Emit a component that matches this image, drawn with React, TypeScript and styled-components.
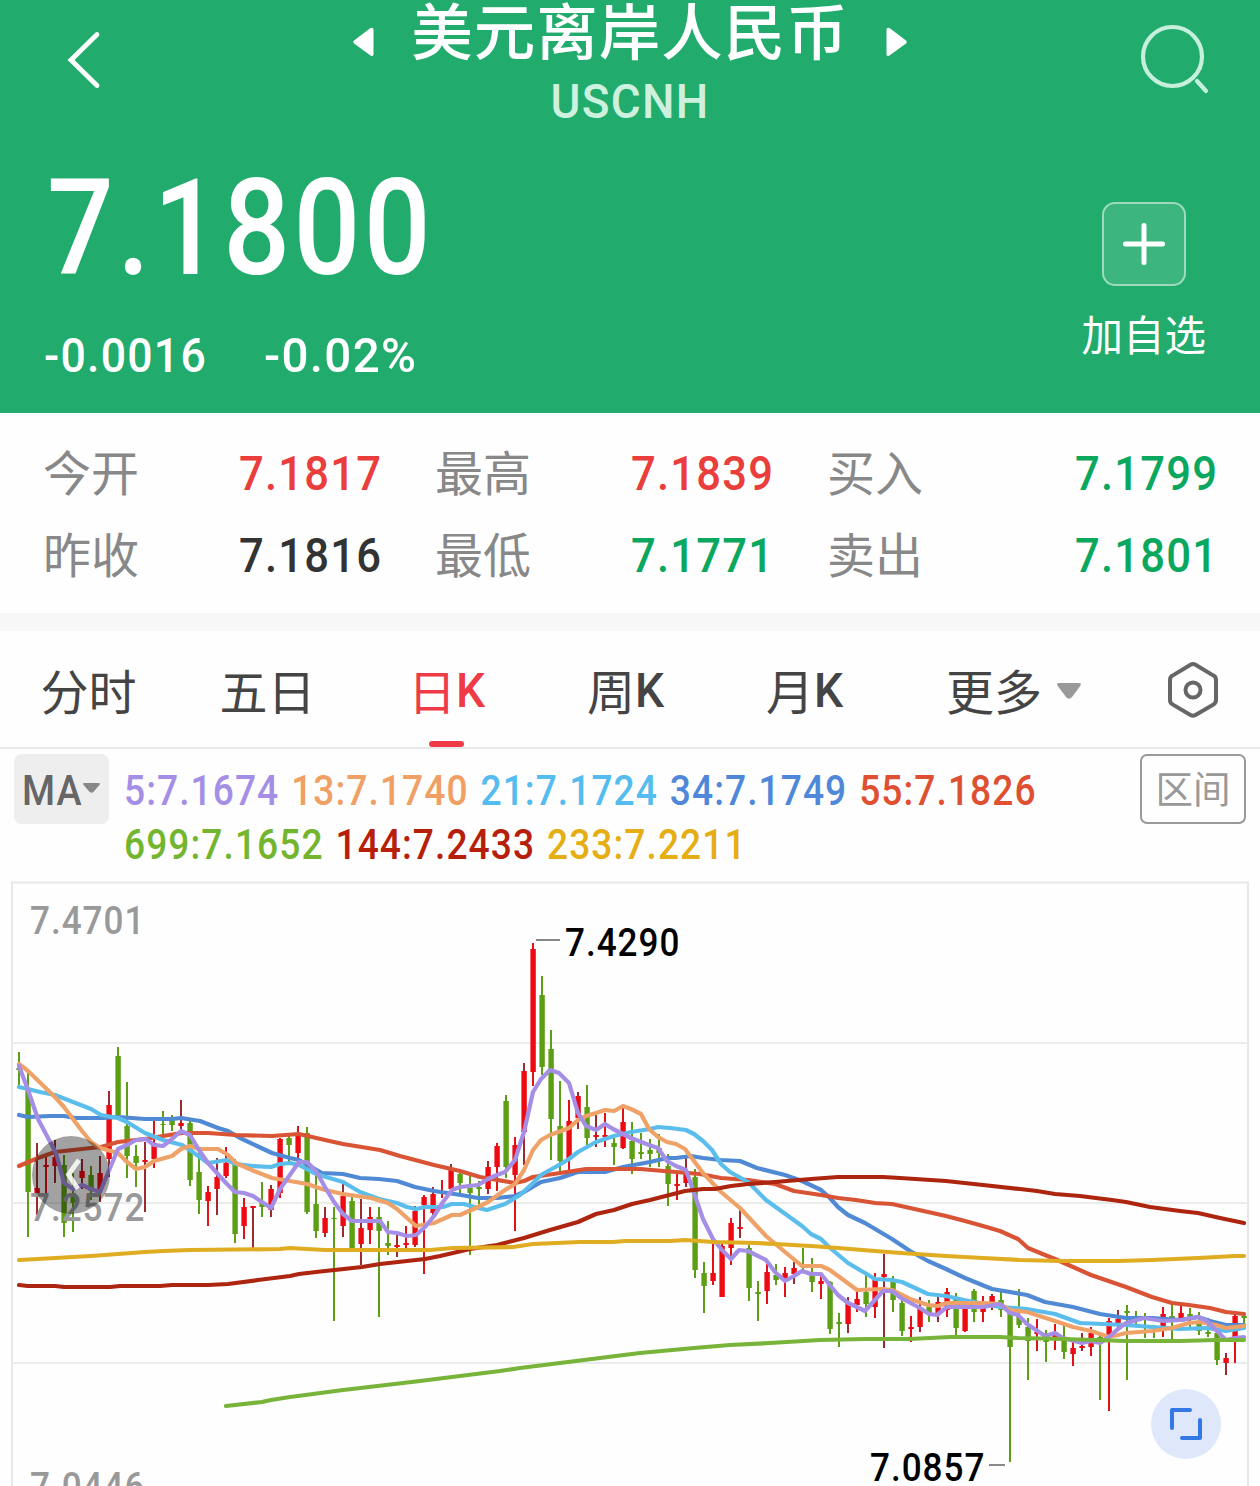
import React from "react";
import styled, { createGlobalStyle } from "styled-components";

const GlobalStyle = createGlobalStyle`
  * { box-sizing: border-box; }
  body {
    margin: 0;
    background: #fff;
    font-family: Roboto, "Noto Sans CJK SC", sans-serif;
  }
`;

const Page = styled.main`
  width: 1260px;
  height: 1486px;
  overflow: hidden;
  background: #fefefe;
`;

/* Narrow numerals: Roboto condensed horizontally with a little tracking */
const Num = styled.span<{ $size: number; $color?: string; $stretch?: number }>`
  display: inline-block;
  font-size: ${(p) => p.$size}px;
  font-weight: 500;
  color: ${(p) => p.$color ?? "inherit"};
  letter-spacing: 0.028em;
  white-space: nowrap;
  transform: scaleX(${(p) => p.$stretch ?? 0.9});
  transform-origin: left center;
`;

const Header = styled.header`
  height: 413px;
  background: #21ac6d;
  color: #fff;
`;

const TopBar = styled.div`
  height: 128px;
  display: grid;
  grid-template-columns: 353px 554px 353px;
`;

const BackIcon = styled.svg`
  margin: 30px 0 0 64px;
  width: 40px;
  height: 60px;
`;

const SearchIcon = styled.svg`
  margin: 22px 48px 0 auto;
  width: 72px;
  height: 74px;
`;

const TitleBlock = styled.div`
  display: flex;
  flex-direction: column;
  align-items: center;
  padding-top: 4px;
`;

const TitleRow = styled.div`
  width: 100%;
  display: flex;
  justify-content: space-between;
  align-items: center;
`;

const Title = styled.h1`
  margin: 0;
  font-size: 61.5px;
  letter-spacing: 1px;
  line-height: 60px;
  font-weight: 500;
`;

const Arrow = styled.svg`
  width: 21px;
  height: 30px;
  margin-top: 16px;
`;

const Code = styled.div`
  margin-top: 13px;
  font-size: 49px;
  font-weight: 500;
  line-height: 50px;
  letter-spacing: 0.028em;
  color: #cdf1de;
  transform: scaleX(0.935);
`;

const QuoteRow = styled.div`
  display: flex;
  justify-content: space-between;
  padding: 34px 54px 0 44px;
`;

const Price = styled.div`
  line-height: 134px;
  height: 134px;
  padding-left: 3px;
`;

const Changes = styled.div`
  display: grid;
  grid-template-columns: 220px 200px;
  line-height: 50px;
  margin-top: 35px;
`;

const AddColumn = styled.div`
  display: flex;
  flex-direction: column;
  align-items: center;
  padding-top: 40px;
`;

const AddBox = styled.div`
  width: 84px;
  height: 84px;
  border: 2px solid rgba(255, 255, 255, 0.5);
  border-radius: 13px;
  background: rgba(255, 255, 255, 0.12);
  display: flex;
  align-items: center;
  justify-content: center;
`;

const AddLabel = styled.div`
  margin-top: 26px;
  font-size: 41.5px;
  line-height: 50px;
`;

const Stats = styled.section`
  height: 200px;
  padding: 20px 0 0 43px;
  display: grid;
  grid-template-columns: 196px 196px 196px 196px 248px 1fr;
  grid-auto-rows: 82px;
  line-height: 82px;
`;

const StatLabel = styled.span`
  padding-top: 1px;
  font-size: 48px;
  color: #888;
`;

const Divider = styled.div`
  height: 18px;
  background: #f7f7f7;
`;

const Tabs = styled.nav`
  height: 118px;
  border-bottom: 2px solid #e8e8e8;
  display: flex;
`;

const Tab = styled.div<{ $active?: boolean; $shift?: number }>`
  width: 179px;
  flex: none;
  display: grid;
  grid-template-rows: 110px 6px;
  justify-items: center;
  padding-left: ${(p) => p.$shift ?? 0}px;
  margin-left: -1px;
  margin-right: 1px;
  color: ${(p) => (p.$active ? "#ee3b46" : "#444")};
`;

const TabText = styled.div`
  display: flex;
  align-items: center;
  padding-top: 5px;
  font-size: 48px;
  white-space: nowrap;
`;

const TabLetter = styled(Num)`
  width: 29px;
  margin-top: 3px;
`;

const TabMark = styled.i`
  width: 35px;
  height: 6px;
  border-radius: 3px;
  background: #ee3b46;
`;

const MoreArrow = styled.svg`
  width: 24px;
  height: 16px;
  margin: 5px 0 0 15px;
`;

const Gear = styled.svg`
  width: 54px;
  height: 58px;
  margin: 30px 0 0 92px;
`;

const Legend = styled.section`
  height: 132px;
  padding: 5px 14px 0;
  display: flex;
`;

const MaButton = styled.div`
  flex: none;
  width: 95px;
  height: 70px;
  border-radius: 8px;
  background: #eee;
  color: #666;
  display: flex;
  align-items: center;
  padding: 3px 0 0 8px;
`;

const MaText = styled(Num)`
  width: 61px;
`;

const MaArrow = styled.svg`
  width: 17px;
  height: 10px;
  margin-bottom: 6px;
`;

const MaList = styled.div`
  flex: 1;
  min-width: 0;
  padding: 10px 0 0 15px;
`;

const MaRow = styled.div`
  height: 54px;
  line-height: 54px;
  display: flex;
  gap: 13.5px;
  font-size: 42px;
  letter-spacing: 0.028em;
  font-weight: 500;
  white-space: nowrap;
  transform: scaleX(0.885);
  transform-origin: left center;
`;

const MaItem = styled.span<{ $color: string }>`
  color: ${(p) => p.$color};
`;

const RangeButton = styled.div`
  flex: none;
  width: 106px;
  height: 70px;
  border: 2px solid #999;
  border-radius: 7px;
  color: #999;
  font-size: 37.5px;
  line-height: 69px;
  text-align: center;
`;

const Chart = styled.svg`
  display: block;
  width: 1260px;
  height: 605px;
`;

const STATS: [string, string, string][] = [
  ["今开", "7.1817", "#e93e3b"],
  ["最高", "7.1839", "#e93e3b"],
  ["买入", "7.1799", "#0aa75e"],
  ["昨收", "7.1816", "#333"],
  ["最低", "7.1771", "#0aa75e"],
  ["卖出", "7.1801", "#0aa75e"],
];

const MA_ROWS: [string, string][][] = [
  [
    ["5:7.1674", "#a58fe6"],
    ["13:7.1740", "#f0a064"],
    ["21:7.1724", "#54bcee"],
    ["34:7.1749", "#4f88d8"],
    ["55:7.1826", "#de5031"],
  ],
  [
    ["699:7.1652", "#74b530"],
    ["144:7.2433", "#b6200b"],
    ["233:7.2211", "#e5ae14"],
  ],
];

/* kind (g = down, r = up, d = up with dark wick), high, body top, body bottom, low */
type Candle = [string, number, number, number, number];
const CANDLES: Candle[] = [
  ["g", 1052, 1068, 1070, 1087], ["g", 1073, 1088, 1192, 1237], ["d", 1143, 1188, 1194, 1215],
  ["r", 1155, 1165, 1167, 1198], ["d", 1140, 1157, 1166, 1183], ["g", 1155, 1165, 1223, 1237],
  ["g", 1173, 1193, 1203, 1232], ["d", 1159, 1171, 1178, 1189], ["g", 1166, 1175, 1191, 1200],
  ["d", 1156, 1173, 1190, 1202], ["d", 1091, 1105, 1159, 1177], ["g", 1047, 1056, 1115, 1119],
  ["g", 1082, 1126, 1156, 1178], ["g", 1145, 1156, 1163, 1187], ["d", 1142, 1160, 1162, 1212],
  ["r", 1121, 1143, 1159, 1168], ["g", 1111, 1124, 1125, 1137], ["g", 1115, 1117, 1125, 1131],
  ["d", 1100, 1123, 1126, 1132], ["g", 1118, 1123, 1180, 1186], ["g", 1153, 1172, 1200, 1214],
  ["r", 1186, 1192, 1201, 1226], ["d", 1158, 1177, 1189, 1215], ["r", 1147, 1163, 1176, 1178],
  ["g", 1159, 1163, 1234, 1243], ["r", 1198, 1207, 1226, 1239], ["d", 1207, 1206, 1208, 1248],
  ["g", 1182, 1203, 1207, 1217], ["d", 1185, 1189, 1210, 1217], ["r", 1138, 1139, 1193, 1198],
  ["g", 1136, 1138, 1145, 1162], ["r", 1126, 1133, 1153, 1158], ["g", 1127, 1133, 1212, 1214],
  ["g", 1169, 1204, 1231, 1238], ["d", 1207, 1218, 1233, 1237], ["g", 1207, 1218, 1219, 1321],
  ["d", 1183, 1196, 1226, 1237], ["g", 1197, 1201, 1248, 1252], ["d", 1199, 1228, 1244, 1265],
  ["r", 1207, 1217, 1230, 1244], ["g", 1207, 1217, 1231, 1317], ["g", 1221, 1243, 1246, 1255],
  ["d", 1235, 1245, 1247, 1257], ["r", 1226, 1243, 1245, 1248], ["d", 1206, 1211, 1245, 1247],
  ["r", 1195, 1197, 1205, 1274], ["d", 1187, 1194, 1213, 1217], ["r", 1180, 1190, 1190, 1198],
  ["d", 1164, 1170, 1189, 1191], ["g", 1169, 1174, 1183, 1193], ["g", 1173, 1188, 1193, 1255],
  ["g", 1181, 1187, 1189, 1207], ["d", 1161, 1167, 1189, 1194], ["r", 1143, 1146, 1167, 1191],
  ["g", 1095, 1101, 1167, 1178], ["r", 1137, 1145, 1175, 1231], ["d", 1063, 1071, 1132, 1165],
  ["r", 943, 949, 1072, 1086], ["g", 976, 995, 1067, 1075], ["g", 1030, 1049, 1119, 1160],
  ["g", 1081, 1126, 1161, 1172], ["r", 1100, 1121, 1159, 1170], ["d", 1092, 1096, 1118, 1129],
  ["g", 1085, 1107, 1138, 1145], ["d", 1115, 1135, 1137, 1147], ["r", 1113, 1135, 1137, 1147],
  ["g", 1137, 1143, 1147, 1165], ["r", 1108, 1122, 1148, 1149], ["g", 1122, 1141, 1159, 1174],
  ["g", 1133, 1152, 1154, 1159], ["g", 1139, 1150, 1154, 1167], ["g", 1134, 1148, 1153, 1167],
  ["g", 1154, 1166, 1184, 1206], ["r", 1174, 1184, 1186, 1200], ["d", 1158, 1172, 1183, 1187],
  ["g", 1169, 1177, 1270, 1278], ["g", 1262, 1273, 1286, 1313], ["r", 1243, 1273, 1281, 1285],
  ["r", 1244, 1246, 1297, 1297], ["r", 1218, 1223, 1248, 1265], ["d", 1209, 1227, 1229, 1238],
  ["g", 1245, 1248, 1288, 1301], ["g", 1281, 1292, 1294, 1321], ["r", 1263, 1272, 1291, 1304],
  ["g", 1264, 1275, 1280, 1285], ["r", 1267, 1273, 1278, 1297], ["d", 1262, 1268, 1274, 1284],
  ["g", 1248, 1270, 1271, 1273], ["g", 1258, 1272, 1282, 1292], ["r", 1275, 1281, 1284, 1299],
  ["g", 1281, 1282, 1329, 1334], ["g", 1313, 1322, 1324, 1347], ["d", 1297, 1303, 1324, 1333],
  ["r", 1290, 1299, 1305, 1312], ["g", 1275, 1292, 1304, 1317], ["r", 1273, 1280, 1307, 1318],
  ["d", 1254, 1274, 1277, 1348], ["g", 1276, 1280, 1300, 1312], ["g", 1300, 1303, 1331, 1336],
  ["r", 1316, 1327, 1329, 1342], ["d", 1297, 1309, 1327, 1332], ["g", 1300, 1304, 1313, 1322],
  ["d", 1297, 1302, 1313, 1322], ["r", 1288, 1292, 1310, 1317], ["g", 1293, 1299, 1328, 1335],
  ["r", 1305, 1308, 1331, 1332], ["g", 1289, 1291, 1312, 1322], ["r", 1296, 1308, 1312, 1322],
  ["d", 1294, 1296, 1302, 1310], ["g", 1292, 1300, 1310, 1317], ["g", 1312, 1313, 1347, 1462],
  ["g", 1289, 1316, 1325, 1328], ["g", 1318, 1327, 1341, 1380], ["r", 1319, 1332, 1334, 1351],
  ["g", 1330, 1333, 1342, 1362], ["r", 1324, 1332, 1337, 1350], ["g", 1326, 1341, 1352, 1359],
  ["r", 1342, 1348, 1354, 1366], ["d", 1333, 1346, 1348, 1351], ["r", 1327, 1333, 1347, 1356],
  ["g", 1335, 1337, 1342, 1400], ["r", 1318, 1321, 1335, 1411], ["d", 1310, 1319, 1325, 1327],
  ["g", 1305, 1311, 1313, 1380], ["g", 1311, 1318, 1318, 1325], ["g", 1313, 1325, 1325, 1338],
  ["g", 1325, 1330, 1330, 1338], ["r", 1307, 1314, 1327, 1337], ["g", 1304, 1316, 1318, 1339],
  ["r", 1305, 1313, 1320, 1322], ["g", 1308, 1314, 1319, 1327], ["g", 1312, 1321, 1331, 1335],
  ["g", 1318, 1332, 1334, 1337], ["g", 1332, 1333, 1360, 1365], ["d", 1353, 1358, 1363, 1375],
  ["r", 1314, 1316, 1337, 1363], ["g", 1314, 1316, 1318, 1323],
];

const LINES: { color: string; points: string }[] = [
  {
    color: "#5089d4",
    points:
      "19,1115 28,1117 50,1116 64,1116 75,1118 103,1118 118,1117 145,1119 172,1119 181,1118 200,1121 218,1128 228,1131 240,1138 272,1153 290,1158 299,1160 322,1173 343,1174 360,1178 379,1179 397,1181 415,1187 434,1191 461,1195 478,1198 497,1198 515,1196 524,1192 541,1182 560,1178 578,1172 605,1172 623,1167 650,1162 667,1158 676,1158 691,1156 703,1158 721,1160 740,1161 757,1168 785,1175 802,1181 821,1190 829,1197 838,1207 848,1215 865,1223 892,1239 910,1251 928,1261 946,1269 965,1278 992,1289 1027,1295 1045,1302 1073,1307 1100,1314 1126,1318 1152,1318 1180,1320 1198,1317 1210,1321 1226,1325 1244,1325",
  },
  {
    color: "#d95335",
    points:
      "19,1166 38,1158 55,1152 73,1150 91,1148 101,1147 118,1142 145,1139 163,1136 182,1133 208,1133 236,1135 272,1136 299,1134 325,1140 343,1144 380,1150 400,1156 434,1165 460,1171 480,1177 515,1183 524,1181 533,1177 560,1173 586,1169 614,1169 640,1169 676,1172 700,1174 721,1178 748,1180 775,1184 794,1191 821,1195 838,1198 856,1200 875,1203 892,1204 910,1208 946,1216 965,1221 983,1226 1000,1231 1018,1239 1028,1248 1045,1255 1055,1259 1091,1275 1126,1287 1152,1297 1172,1303 1189,1305 1210,1308 1226,1312 1244,1314",
  },
  {
    color: "#5abdeb",
    points:
      "19,1087 28,1089 40,1092 55,1095 73,1102 91,1109 101,1115 118,1118 127,1122 145,1133 163,1140 182,1145 190,1150 208,1163 227,1160 236,1164 253,1166 271,1167 280,1164 290,1163 299,1165 316,1174 343,1182 360,1192 379,1199 397,1203 407,1207 416,1209 425,1207 443,1207 452,1204 464,1204 478,1208 487,1210 505,1204 520,1195 532,1184 541,1175 559,1165 569,1159 578,1152 596,1142 614,1136 631,1132 650,1129 658,1127 670,1128 686,1130 694,1134 703,1141 712,1150 721,1164 730,1172 748,1182 766,1200 784,1213 802,1226 811,1234 821,1239 829,1247 848,1263 865,1273 875,1279 892,1280 902,1282 928,1294 946,1296 964,1300 1000,1307 1027,1309 1055,1314 1080,1323 1126,1325 1152,1327 1180,1329 1207,1328 1226,1331 1244,1328",
  },
  {
    color: "#efa268",
    points:
      "19,1064 28,1071 55,1097 64,1107 82,1131 91,1142 100,1148 118,1153 127,1162 136,1169 145,1167 154,1161 172,1156 181,1149 190,1146 199,1149 218,1149 228,1155 236,1163 254,1171 272,1178 290,1181 307,1184 325,1190 343,1194 371,1198 388,1203 397,1209 416,1226 434,1223 452,1215 460,1215 478,1207 488,1202 505,1190 515,1184 524,1170 533,1150 541,1140 550,1135 569,1128 578,1120 586,1116 596,1113 605,1110 614,1111 623,1106 631,1109 641,1114 649,1129 658,1137 667,1142 676,1144 685,1149 703,1173 721,1192 740,1208 766,1236 785,1252 802,1266 821,1266 830,1270 857,1290 883,1289 892,1290 910,1299 928,1305 938,1306 947,1303 983,1303 1000,1304 1010,1310 1027,1312 1055,1321 1073,1327 1091,1331 1109,1337 1118,1335 1126,1333 1152,1331 1172,1328 1189,1323 1200,1322 1216,1325 1226,1328 1244,1326",
  },
  {
    color: "#a58ee5",
    points:
      "19,1066 28,1090 38,1119 56,1153 64,1183 73,1189 82,1185 91,1189 100,1192 118,1149 127,1145 136,1140 146,1139 154,1145 163,1146 172,1139 181,1131 190,1135 199,1150 208,1163 226,1183 235,1192 244,1193 253,1196 262,1202 271,1208 280,1189 299,1162 307,1162 316,1171 325,1187 334,1202 343,1214 352,1221 371,1221 380,1221 388,1232 397,1233 407,1236 416,1235 425,1227 434,1216 443,1202 452,1190 460,1187 478,1185 488,1179 497,1175 505,1172 515,1160 524,1132 533,1092 541,1079 550,1070 559,1073 569,1083 578,1113 586,1126 596,1130 605,1124 613,1129 631,1138 649,1145 658,1148 667,1161 676,1166 686,1170 694,1193 703,1219 713,1239 722,1250 731,1259 739,1250 748,1251 766,1260 775,1272 785,1281 794,1276 802,1271 811,1274 821,1274 829,1284 838,1295 848,1303 857,1307 865,1311 874,1301 883,1291 892,1291 901,1298 920,1308 929,1314 937,1315 947,1307 983,1307 1000,1304 1010,1313 1018,1315 1027,1324 1045,1336 1055,1333 1063,1338 1082,1343 1091,1341 1100,1343 1109,1337 1118,1329 1126,1323 1144,1318 1163,1321 1181,1320 1198,1317 1207,1321 1216,1330 1226,1340 1235,1338 1244,1337",
  },
  {
    color: "#ad250f",
    points:
      "19,1285 28,1286 55,1286 64,1287 110,1287 120,1286 160,1286 172,1285 208,1285 228,1284 258,1280 290,1276 299,1274 325,1271 362,1267 380,1264 407,1261 425,1259 440,1256 453,1253 470,1249 497,1245 524,1238 550,1230 578,1222 596,1214 614,1210 632,1204 650,1200 685,1191 703,1189 715,1189 731,1186 748,1184 775,1182 811,1179 838,1177 883,1177 900,1178 946,1181 983,1185 1020,1189 1037,1191 1055,1194 1080,1196 1112,1200 1126,1202 1150,1207 1180,1211 1198,1213 1220,1218 1244,1223",
  },
  {
    color: "#dfac22",
    points:
      "19,1260 38,1259 55,1258 91,1256 118,1254 145,1252 163,1251 190,1250 280,1249 290,1248 307,1249 325,1250 430,1250 453,1248 513,1247 533,1244 580,1242 613,1242 625,1241 670,1241 685,1240 713,1242 757,1243 775,1244 811,1246 838,1248 875,1251 901,1253 946,1256 983,1258 1020,1260 1060,1261 1118,1261 1152,1260 1198,1258 1235,1256 1244,1256",
  },
  {
    color: "#78b43a",
    points:
      "226,1406 262,1402 271,1400 290,1397 298,1396 343,1390 352,1389 420,1381 500,1371 520,1368 560,1363 600,1358 640,1353 694,1348 730,1345 770,1343 820,1340 865,1339 910,1339 950,1337 1000,1337 1018,1338 1063,1339 1126,1341 1180,1341 1216,1340 1244,1340",
  },
];

const BODY: Record<string, string> = { g: "#5d9f14", r: "#ee0a12", d: "#ee0a12" };
const WICK: Record<string, string> = { g: "#5d9f14", r: "#e01218", d: "#9a2b30" };

function ChartText({ x, y, fill, children }: { x: number; y: number; fill: string; children: string }) {
  return (
    <text
      transform={`translate(${x} ${y}) scale(0.9 1)`}
      fill={fill}
      fontSize="39"
      fontWeight="500"
      letterSpacing="1.1"
    >
      {children}
    </text>
  );
}

function KLineChart() {
  return (
    <Chart viewBox="0 881 1260 605">
      <rect x="12" y="882.5" width="1236" height="640" fill="none" stroke="#e8e8e8" strokeWidth="2" />
      {[1043, 1203, 1363].map((y) => (
        <line key={y} x1="12" x2="1248" y1={y} y2={y} stroke="#ebebeb" strokeWidth="2" />
      ))}
      {CANDLES.map(([kind, high, top, bottom, low], i) => {
        const x = Math.round(19.4 + i * 9.002);
        return (
          <g key={i}>
            <rect x={x - 1} y={high} width="2" height={low - high} fill={WICK[kind]} />
            <rect x={x - 2.6} y={top} width="5.4" height={bottom - top} fill={BODY[kind]} />
          </g>
        );
      })}
      {LINES.map((l) => (
        <polyline
          key={l.color}
          points={l.points}
          fill="none"
          stroke={l.color}
          strokeWidth="4.2"
          strokeLinejoin="round"
          strokeLinecap="round"
        />
      ))}
      <ChartText x={30} y={934} fill="#999">7.4701</ChartText>
      <ChartText x={30} y={1221} fill="#999">7.2572</ChartText>
      <ChartText x={30} y={1500} fill="#999">7.0446</ChartText>
      <line x1="536" x2="560" y1="940" y2="940" stroke="#888" strokeWidth="2" />
      <ChartText x={565} y={956} fill="#000">7.4290</ChartText>
      <line x1="989" x2="1005" y1="1465" y2="1465" stroke="#888" strokeWidth="2" />
      <ChartText x={870} y={1481} fill="#000">7.0857</ChartText>
      <circle cx="71" cy="1175" r="39" fill="#000" fillOpacity="0.36" />
      <path d="M79 1160 L68.5 1174.5 L78 1189" fill="none" stroke="#fff" strokeOpacity="0.85" strokeWidth="4.8" />
      <circle cx="1186" cy="1424" r="35" fill="#dfe8fb" />
      <path
        d="M1172 1428 V1410 H1190 M1200 1420 V1438 H1182"
        fill="none"
        stroke="#3478e6"
        strokeWidth="4"
        strokeLinecap="round"
        strokeLinejoin="round"
      />
    </Chart>
  );
}

export default function App() {
  return (
    <Page>
      <GlobalStyle />
      <Header>
        <TopBar>
          <BackIcon viewBox="0 0 40 60" fill="none" stroke="#fff" strokeWidth="4.8" strokeLinecap="round">
            <path d="M33 4.5 L7 30 L33 55.5" />
          </BackIcon>
          <TitleBlock>
            <TitleRow>
              <Arrow viewBox="0 0 21 30" fill="#fff">
                <path d="M17.5 1 Q20.5 0 20.5 3 V27 Q20.5 30 17.5 28.5 L1 16.5 Q-0.5 15 1 13.5 Z" />
              </Arrow>
              <Title>美元离岸人民币</Title>
              <Arrow viewBox="0 0 21 30" fill="#fff">
                <path d="M3.5 1 Q0.5 0 0.5 3 V27 Q0.5 30 3.5 28.5 L20 16.5 Q21.5 15 20 13.5 Z" />
              </Arrow>
            </TitleRow>
            <Code>USCNH</Code>
          </TitleBlock>
          <SearchIcon viewBox="0 0 72 74" fill="none" stroke="#c6f0db" strokeWidth="4.2" strokeLinecap="round">
            <circle cx="32.5" cy="34.5" r="29.5" />
            <path d="M57 59 L66 69" />
          </SearchIcon>
        </TopBar>
        <QuoteRow>
          <div>
            <Price>
              <Num $size={134} $stretch={0.878}>7.1800</Num>
            </Price>
            <Changes>
              <Num $size={49} $stretch={0.91}>-0.0016</Num>
              <Num $size={49} $stretch={0.97}>-0.02%</Num>
            </Changes>
          </div>
          <AddColumn>
            <AddBox>
              <svg width="44" height="44" stroke="#fff" strokeWidth="5" strokeLinecap="round">
                <path d="M22 3.5 V40.5 M3.5 22 H40.5" />
              </svg>
            </AddBox>
            <AddLabel>加自选</AddLabel>
          </AddColumn>
        </QuoteRow>
      </Header>
      <Stats>
        {STATS.map(([label, value, color]) => (
          <React.Fragment key={label}>
            <StatLabel>{label}</StatLabel>
            <Num $size={49} $color={color} $stretch={0.89}>{value}</Num>
          </React.Fragment>
        ))}
      </Stats>
      <Divider />
      <Tabs>
        <Tab><TabText>分时</TabText></Tab>
        <Tab><TabText>五日</TabText></Tab>
        <Tab $active>
          <TabText>日<TabLetter $size={49} $stretch={0.94}>K</TabLetter></TabText>
          <TabMark />
        </Tab>
        <Tab><TabText>周<TabLetter $size={49} $stretch={0.94}>K</TabLetter></TabText></Tab>
        <Tab><TabText>月<TabLetter $size={49} $stretch={0.94}>K</TabLetter></TabText></Tab>
        <Tab $shift={52}>
          <TabText>
            更多
            <MoreArrow viewBox="0 0 24 16" fill="#999">
              <path d="M2 0 H22 Q25 0 23.2 3 L15 14 Q12 17.5 9 14 L0.8 3 Q-1 0 2 0 Z" />
            </MoreArrow>
          </TabText>
        </Tab>
        <Gear viewBox="0 0 54 58" fill="none" stroke="#666" strokeWidth="4" strokeLinejoin="round">
          <path d="M24.5 3.8 Q27 2.4 29.5 3.8 L47.5 14.6 Q50 16 50 19 V39 Q50 42 47.5 43.4 L29.5 54 Q27 55.4 24.5 54 L6.5 43.4 Q4 42 4 39 V19 Q4 16 6.5 14.6 Z" />
          <circle cx="27" cy="29" r="7.5" />
        </Gear>
      </Tabs>
      <Legend>
        <MaButton>
          <MaText $size={42}>MA</MaText>
          <MaArrow viewBox="0 0 24 16" preserveAspectRatio="none" fill="#888">
            <path d="M2 0 H22 Q25 0 23.2 3 L15 14 Q12 17.5 9 14 L0.8 3 Q-1 0 2 0 Z" />
          </MaArrow>
        </MaButton>
        <MaList>
          {MA_ROWS.map((row, i) => (
            <MaRow key={i}>
              {row.map(([text, color]) => (
                <MaItem key={text} $color={color}>{text}</MaItem>
              ))}
            </MaRow>
          ))}
        </MaList>
        <RangeButton>区间</RangeButton>
      </Legend>
      <KLineChart />
    </Page>
  );
}
